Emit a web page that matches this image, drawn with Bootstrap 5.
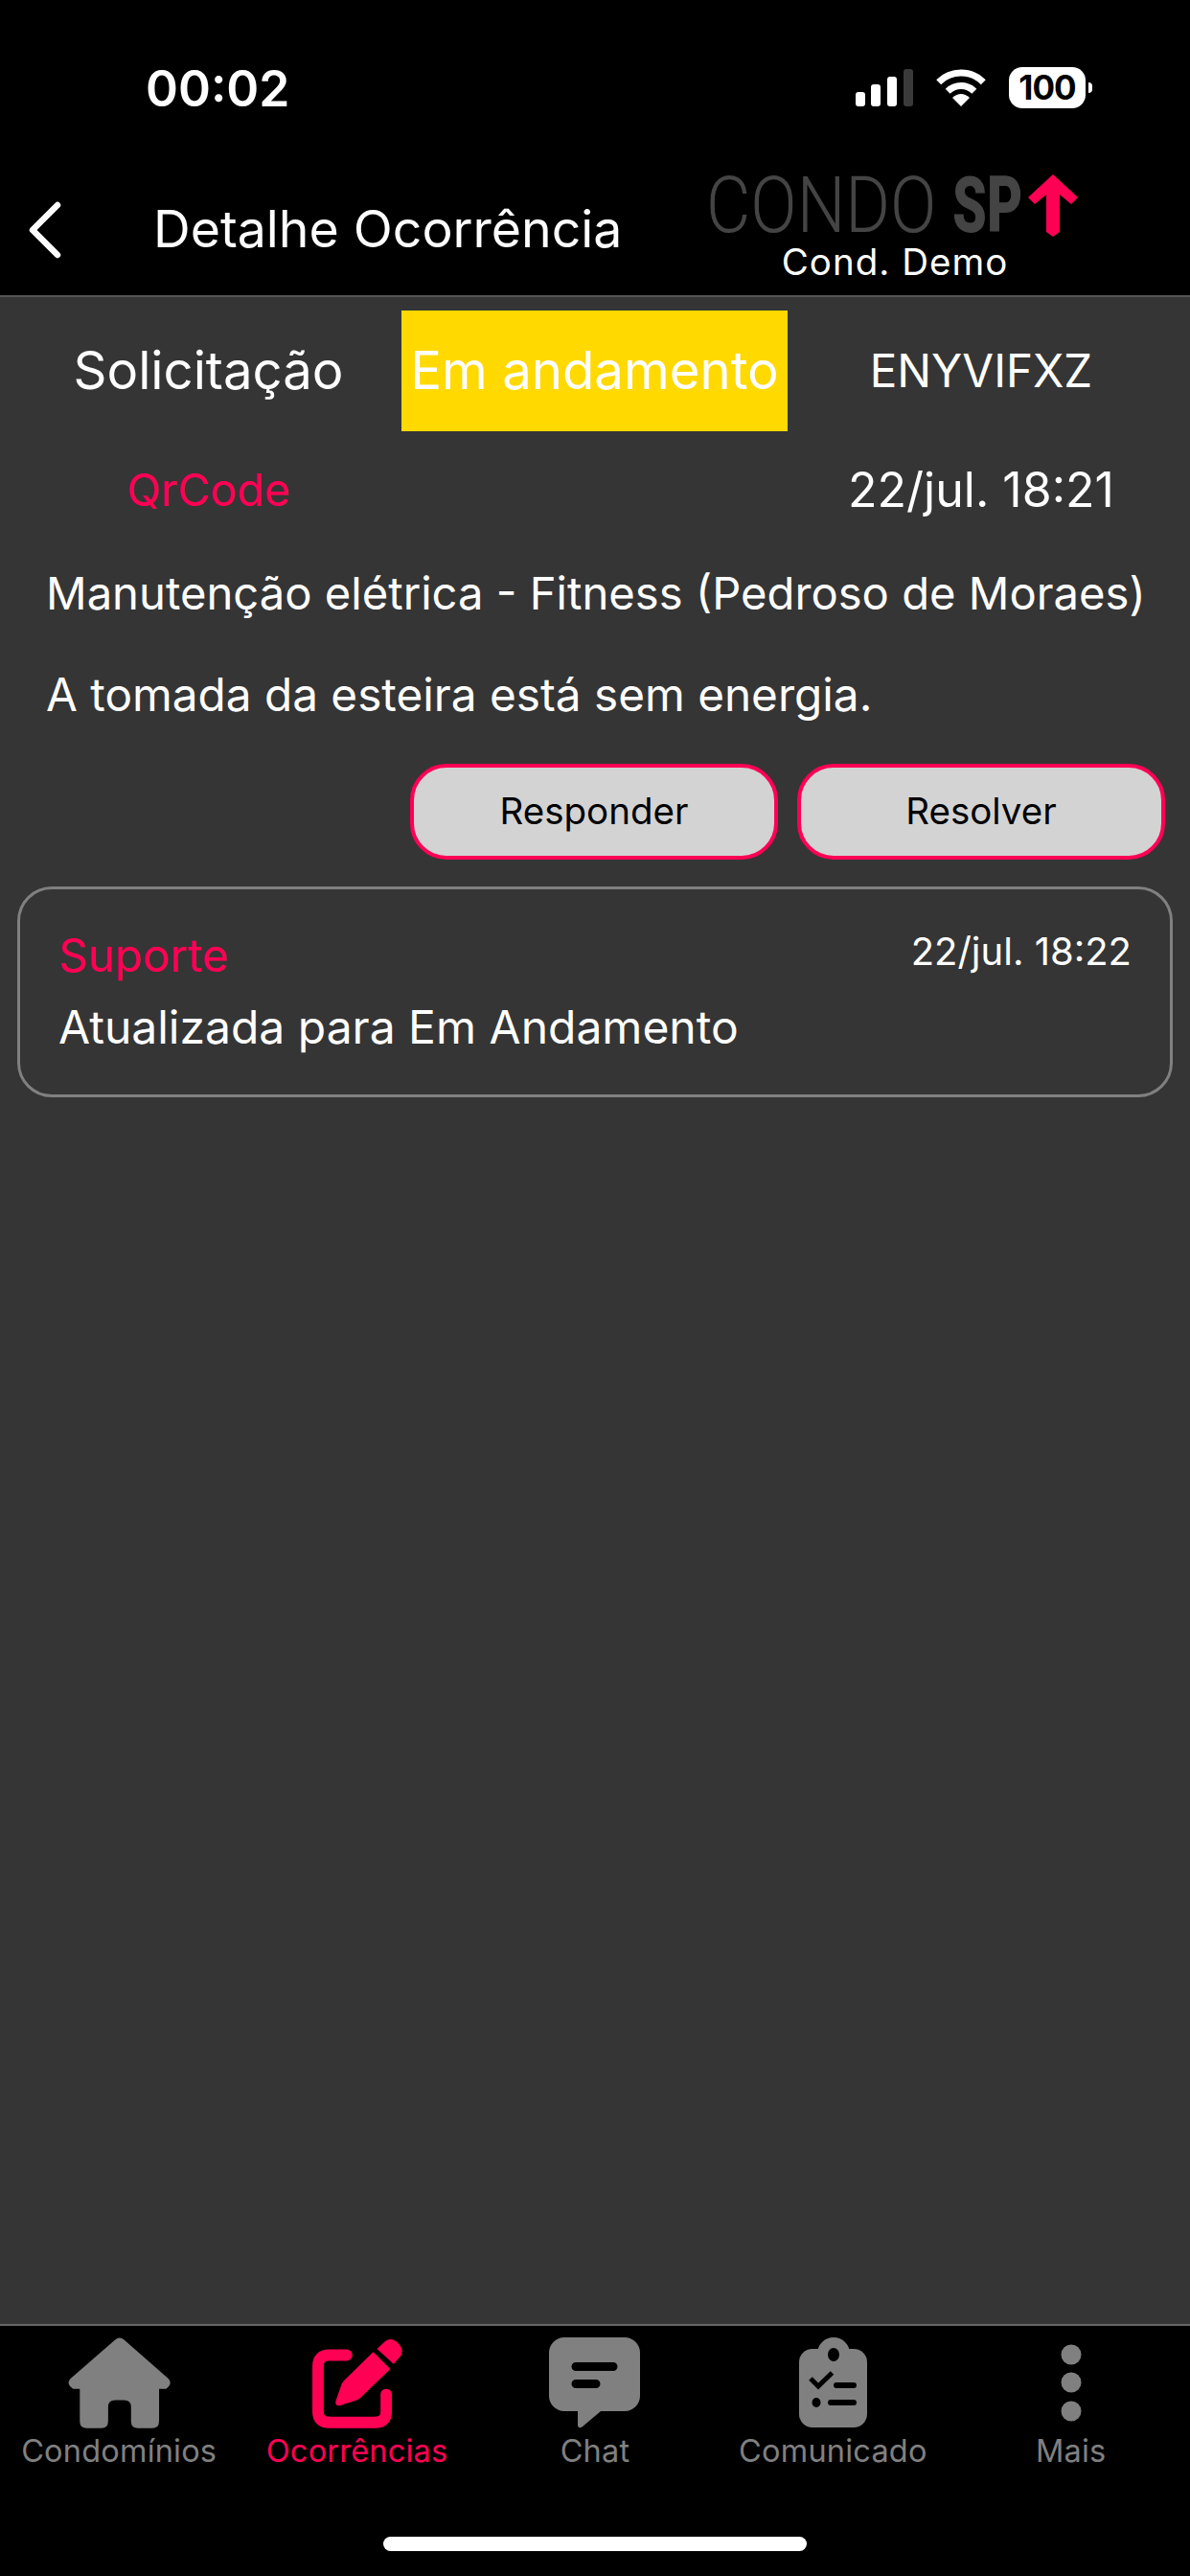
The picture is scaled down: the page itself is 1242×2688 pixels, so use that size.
<!DOCTYPE html>
<html lang="pt">
<head>
    <meta charset="UTF-8">
    <title>Detalhe Ocorrência</title>
    <link href="https://cdn.jsdelivr.net/npm/bootstrap@5.3.2/dist/css/bootstrap.min.css" rel="stylesheet">
    <style>
        body {
            font-family: Inter, "Liberation Sans", sans-serif;
            background: #000;
            color: #fff;
        }
        .app-page { height: 2688px; width: 1242px; }
        .status-row { height: 170px; padding: 0 102px 0 152px; }
        .status-time { font-size: 51.5px; font-weight: 600; line-height: 1; margin-top: 67px; }
        .status-icons { margin-top: 70px; gap: 24px; }
        .batt-body {
            width: 80px; height: 43px; background: #fff; color: #000; border-radius: 14px;
            font-size: 35px; font-weight: 700; line-height: 43px; text-align: center; letter-spacing: -1px;
        }
        .batt-nub { width: 4px; height: 11px; background: #fff; border-radius: 0 4px 4px 0; margin-left: 3px; }
        .nav-top { height: 140px; border-bottom: 2px solid #555; padding-left: 30px; }
        .nav-back { margin-top: 40px; }
        .nav-title { font-size: 53.6px; line-height: 62px; margin: 38px 0 0 96px; white-space: nowrap; }
        .logo-box { margin: 12px 117px 0 auto; width: 388px; }
        .logo-art { display: block; overflow: visible; margin: -20px 0 -10px; }
        .logo-sub { font-size: 38.5px; line-height: 40px; letter-spacing: 1px; margin-top: 5px; padding-left: 6px; }
        .main-area { background: #353535; }
        .tab-grid { display: grid; grid-template-columns: 419px 403px 420px; }
        .tab-top { margin-top: 14px; }
        .tab-cell { height: 126px; font-size: 54.5px; white-space: nowrap; }
        .tab-cell-first { padding-left: 16px; }
        .tab-cell-last { padding-right: 16px; font-size: 47.5px; }
        .tab-on { background: #ffd900; }
        .meta-row { margin-top: 33px; font-size: 46.5px; line-height: 56px; }
        .meta-date { font-size: 50px; padding-right: 16px; white-space: nowrap; }
        .txt-pink { color: #ff0055; }
        .body-line { line-height: 58px; padding-left: 48px; white-space: nowrap; }
        .body-first { margin-top: 51px; font-size: 47.2px; }
        .body-next { margin-top: 48px; font-size: 47.7px; }
        .action-row { padding-right: 26px; gap: 20px; margin-top: 43px; }
        .btn-act {
            width: 384px; height: 100px; background: #d3d3d3; color: #000;
            border: 4px solid #ff0055; border-radius: 38px; font-size: 38.5px; padding: 0;
        }
        .btn-act:hover { background: #d3d3d3; color: #000; border-color: #ff0055; }
        .note-box {
            margin: 28px 18px 0; height: 220px; background: transparent; color: #fff;
            border: 3px solid #808080; border-radius: 36px; padding: 41px 40px 0;
        }
        .note-who { font-size: 47.5px; line-height: 56px; }
        .note-date { font-size: 40px; line-height: 48px; }
        .note-text { font-size: 48px; line-height: 56px; margin-top: 19px; }
        .tab-foot { height: 263px; border-top: 2px solid #666; }
        .foot-item { width: 20%; color: #808080; font-size: 32.5px; line-height: 38px; padding-top: 12px; letter-spacing: .2px; }
        .foot-item svg { display: block; height: 96px; margin-bottom: 4px; }
        .foot-on { color: #ff0055; }
        .home-bar { width: 442px; height: 15px; background: #fff; border-radius: 8px; margin: 70px auto 0; }
    </style>
</head>
<body>
<div class="app-page d-flex flex-column">
    <div class="status-row d-flex justify-content-between align-items-start">
        <div class="status-time">00:02</div>
        <div class="status-icons d-flex align-items-center">
            <svg width="60" height="39" viewBox="0 0 60 39" fill="#fff">
                <rect x="0" y="24" width="10" height="15" rx="3"/>
                <rect x="16" y="16" width="10" height="23" rx="3"/>
                <rect x="33" y="8" width="10" height="31" rx="3"/>
                <rect x="50" y="0" width="10" height="39" rx="3" fill="#3a3a3a"/>
            </svg>
            <svg width="52" height="39" viewBox="0 0 52 39" fill="none" stroke="#fff" stroke-width="7">
                <path d="M2.7 13.7A33 33 0 0 1 49.3 13.7"/>
                <path d="M12.2 23.2A19.5 19.5 0 0 1 39.800 23.2"/>
                <path d="M26 39L17 30Q26 22 35 30Z" fill="#fff" stroke="none"/>
            </svg>
            <div class="d-flex align-items-center">
                <div class="batt-body">100</div>
                <div class="batt-nub"></div>
            </div>
        </div>
    </div>

    <div class="nav-top d-flex align-items-start">
        <svg class="nav-back" width="34" height="60" viewBox="0 0 34 60" fill="none" stroke="#fff" stroke-width="6.500" stroke-linecap="round" stroke-linejoin="round">
            <path d="M30 4L4 30L30 56"/>
        </svg>
        <div class="nav-title">Detalhe Ocorrência</div>
        <div class="logo-box text-center">
            <svg class="logo-art" width="388" height="96" viewBox="0 0 388 96">
                <text transform="translate(0 80) scale(.87 1)" font-family="Roboto" font-weight="300" font-size="82" fill="#444">CONDO</text>
                <text transform="translate(257 80) scale(.7 1)" font-family="Roboto" font-weight="900" font-size="82" fill="#444">SP</text>
                <path d="M362 20L388 44L381 51L369 41L369 80L362 85L355 80L355 41L343 51L336 44Z" fill="#ff0055"/>
            </svg>
            <div class="logo-sub">Cond. Demo</div>
        </div>
    </div>

    <div class="main-area flex-grow-1">
        <div class="tab-grid tab-top">
            <div class="tab-cell tab-cell-first d-flex align-items-center justify-content-center">Solicitação</div>
            <div class="tab-cell tab-on d-flex align-items-center justify-content-center">Em andamento</div>
            <div class="tab-cell tab-cell-last d-flex align-items-center justify-content-center">ENYVIFXZ</div>
        </div>
        <div class="tab-grid meta-row">
            <div class="tab-cell-first text-center txt-pink">QrCode</div>
            <div></div>
            <div class="text-center meta-date">22/jul. 18:21</div>
        </div>
        <div class="body-line body-first">Manutenção elétrica - Fitness (Pedroso de Moraes)</div>
        <div class="body-line body-next">A tomada da esteira está sem energia.</div>
        <div class="action-row d-flex justify-content-end">
            <button type="button" class="btn btn-act">Responder</button>
            <button type="button" class="btn btn-act">Resolver</button>
        </div>
        <div class="card note-box">
            <div class="d-flex justify-content-between align-items-start">
                <div class="note-who txt-pink">Suporte</div>
                <div class="note-date">22/jul. 18:22</div>
            </div>
            <div class="note-text">Atualizada para Em Andamento</div>
        </div>
    </div>

    <div class="tab-foot">
        <div class="d-flex">
            <div class="foot-item d-flex flex-column align-items-center">
                <svg width="107" height="96" viewBox="90 55 322 288" fill="#808080">
                    <path d="M238 62Q252 50 266 62L405 184Q420 200 398 216L376 216L376 318Q376 340 354 340L310 340Q288 340 288 318L288 274Q288 252 266 252L238 252Q216 252 216 274L216 318Q216 340 194 340L149 340Q127 340 127 318L127 216L106 216Q82 200 98 184Z"/>
                </svg>
                <span>Condomínios</span>
            </div>
            <div class="foot-item foot-on d-flex flex-column align-items-center">
                <svg width="94" height="96" viewBox="852 55 284 288" fill="#ff0055">
                    <path d="M960 110L905 110Q870 110 870 145L870 288Q870 322 905 322L1050 322Q1085 322 1085 288L1085 234" fill="none" stroke="#ff0055" stroke-width="36" stroke-linecap="round"/>
                    <path d="M1044 100L1098 154L1002 246Q994 252 985 254L938 269Q922 270 926 254L942 208Q945 198 952 190Z"/>
                    <path d="M1056 90L1082 66Q1102 52 1122 72Q1144 94 1128 116L1108 138Z"/>
                </svg>
                <span>Ocorrências</span>
            </div>
            <div class="foot-item d-flex flex-column align-items-center">
                <svg width="95" height="96" viewBox="0 0 95 96" fill="#808080">
                    <rect width="95" height="77" rx="16"/>
                    <path d="M30 70L30 92Q31 96 35 93L60 72Z"/>
                    <path d="M28 30.500H67M28 48.500H49" stroke="#000" stroke-width="9" stroke-linecap="round"/>
                </svg>
                <span>Chat</span>
            </div>
            <div class="foot-item d-flex flex-column align-items-center">
                <svg width="71" height="96" viewBox="0 0 71 96" fill="#808080">
                    <rect y="12" width="71" height="82" rx="14"/>
                    <circle cx="36" cy="17" r="17"/>
                    <ellipse cx="36" cy="18" rx="6" ry="7" fill="#000"/>
                    <path d="M12 43L20 51L34.500 37" fill="none" stroke="#000" stroke-width="5"/>
                    <path d="M39 50H57M33 68H57" stroke="#000" stroke-width="6" stroke-linecap="round"/>
                    <ellipse cx="18" cy="68" rx="4.500" ry="5" fill="#000"/>
                </svg>
                <span>Comunicado</span>
            </div>
            <div class="foot-item d-flex flex-column align-items-center">
                <svg width="22" height="96" viewBox="0 0 22 96" fill="#808080">
                    <circle cx="11" cy="18" r="10.500"/>
                    <circle cx="11" cy="47" r="10.500"/>
                    <circle cx="11" cy="77" r="10.500"/>
                </svg>
                <span>Mais</span>
            </div>
        </div>
        <div class="home-bar"></div>
    </div>
</div>
</body>
</html>
